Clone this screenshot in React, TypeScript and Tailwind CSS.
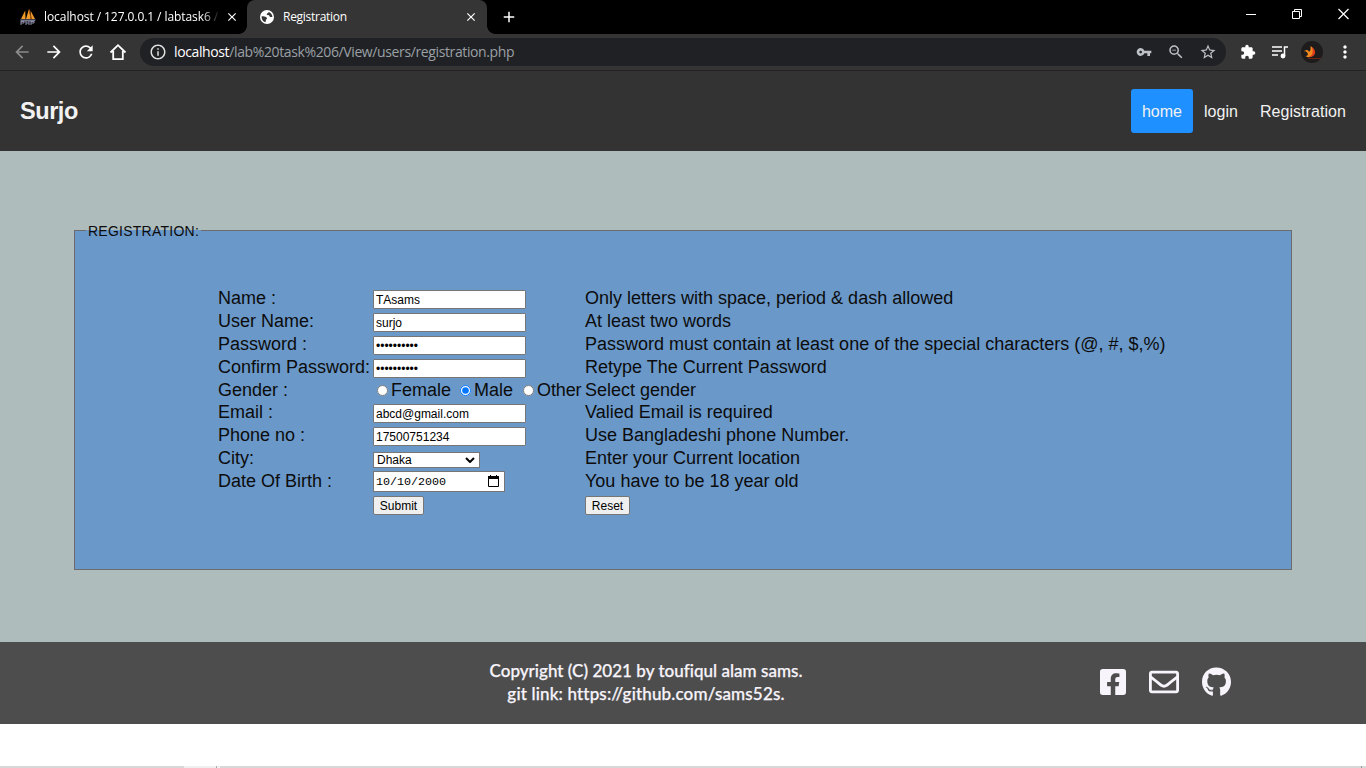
import type { ReactNode } from "react";
import {
  MdArrowBack,
  MdArrowForward,
  MdRefresh,
  MdOutlineInfo,
  MdVpnKey,
  MdStarBorder,
  MdExtension,
  MdMoreVert,
  MdZoomOut,
  MdClose,
  MdAdd,
} from "react-icons/md";
import { FaFacebookSquare, FaRegEnvelope, FaGithub } from "react-icons/fa";

function TabStrip() {
  return (
    <div className="flex h-[34px] bg-black text-[12px] text-white font-['Open_Sans','Noto_Sans',sans-serif]">
      <div className="flex h-[34px] w-[247px] items-center pl-5">
        <svg viewBox="0 0 16 16" className="h-4 w-4 shrink-0">
          <path d="M5.2 1.5 1 10h4.5zM9 0 6 10h4.6zM10.5 1.5 11.5 10H15z" fill="#f29b26" />
          <path d="M9 0 10.6 10h.8L9.8 1z" fill="#c7651a" />
          <path d="M0 10.5h16l-1.5 2H1z" fill="#77798f" />
          <path d="M1 12v4M1 12.5h3v1.5H1M6 12v4M6 14h3M9 12v4M11 12v4M11 12.5h3v1.5h-3" fill="none" stroke="#8b8da6" />
        </svg>
        <div className="ml-2 w-[176px] whitespace-nowrap tracking-[-0.07px] [mask-image:linear-gradient(to_right,black_158px,transparent_176px)]">
          localhost / 127.0.0.1 / labtask6 / l
        </div>
        <MdClose className="ml-[5px] h-[14px] w-[14px] shrink-0" />
      </div>
      <div className="relative flex h-[34px] w-[240px] items-center rounded-t-[8px] bg-[#353535] pl-3">
        <div className="absolute bottom-0 -left-2 h-2 w-2 bg-[radial-gradient(circle_at_0_0,#000_7.5px,#353535_8px)]" />
        <div className="absolute -right-2 bottom-0 h-2 w-2 bg-[radial-gradient(circle_at_100%_0,#000_7.5px,#353535_8px)]" />
        <svg viewBox="0 0 16 16" className="h-4 w-4 shrink-0">
          <circle cx="8" cy="8" r="7" fill="#fff" />
          <path d="M2.6 7.2c2 .1 3.6.2 4.900 1.200 1 .8.3 1.800-.6 2 .1 1.300-.1 2-.6 2.900C4 12.500 2.500 10.500 2.600 7.200z" fill="#353535" />
          <path d="M9.700 2.900c-.2 1.200-1.500 1-1.900 2.100-.3 1 .7 1.400 1.400 1.100.9-.3 1.200 1.200 1.700 1.700.6.500 1.600.3 2.500.2.100-2.300-1.500-4.500-3.700-5.100z" fill="#353535" />
        </svg>
        <span className="ml-2 w-[181px] tracking-[-0.28px]">Registration</span>
        <MdClose className="h-[14px] w-[14px] shrink-0" />
      </div>
      <MdAdd className="mt-[8px] ml-[13px] h-[18px] w-[18px]" />
      <div className="ml-auto flex h-7 items-center">
        <svg viewBox="0 0 104 12" className="mr-[16px] h-3 w-[104px]" fill="none" stroke="#fff">
          <path d="M0 6.500h10" />
          <path d="M46.500 3.500h7v7h-7zM48.500 3.500v-2h7v7h-2" />
          <path d="m92.500 1 10 10m0-10-10 10" strokeWidth="1.200" />
        </svg>
      </div>
    </div>
  );
}

function Toolbar() {
  return (
    <div className="flex h-[37px] items-center border-b border-[#222] bg-[#353535] pb-px text-white">
      <MdArrowBack className="ml-[12px] h-5 w-5 text-[#8a8a8a]" />
      <MdArrowForward className="ml-3 h-5 w-5" />
      <MdRefresh className="ml-3 h-5 w-5" />
      <svg viewBox="0 0 20 20" className="ml-3 h-5 w-5" fill="none" stroke="#fff" strokeWidth="1.800">
        <path d="M2.500 10.500 10 3.200l7.500 7.300M5.200 9v8.100h9.600V9" />
      </svg>
      <div className="ml-3 flex h-7 w-[1086px] items-center rounded-full bg-[#202124] pl-[9px] text-[#bdc1c6]">
        <MdOutlineInfo className="h-[18px] w-[18px] text-[#e0e0e0]" />
        <span className="ml-[7px] text-[14px] whitespace-nowrap text-[#9aa0a6] font-['Open_Sans','Noto_Sans',sans-serif] tracking-[-0.38px]">
          <span className="text-white">localhost</span>/lab%20task%206/View/users/registration.php
        </span>
        <MdVpnKey className="ml-auto h-4 w-4" />
        <MdZoomOut className="ml-[15px] h-[18px] w-[18px]" />
        <MdStarBorder className="mr-[9px] ml-[14px] h-[18px] w-[18px]" />
      </div>
      <MdExtension className="ml-[14px] h-4 w-4" />
      <svg viewBox="0 0 16 14" className="ml-4 h-[14px] w-4" fill="none" stroke="#fff" strokeWidth="1.500">
        <path d="M0 2h10M0 6h10M0 10h6M12.500 11V2H16" />
        <circle cx="11" cy="11" r="1.700" fill="#fff" />
      </svg>
      <svg viewBox="0 0 22 22" className="ml-[13px] h-[22px] w-[22px]">
        <circle cx="11" cy="11" r="11" fill="#1d1b1b" />
        <path d="M2.500 10.500c1.500-1.500 4-2.500 5-.5 1.500 2 2.500-2 2-5 3 2 5 5 3.500 8.500-2 3-6 3.500-8.500 1.500 2 0 3-1 2-3-1-1.500-2.500-2-4-1.500z" fill="#f2891f" />
        <path d="M8 15.500c3.500-.5 4.500-4 3-9.500 4 3.500 4 7 1 9-1.500 1-3.500 1.300-4 .5z" fill="#dc3d1b" />
        <path d="M7 17.500h13" stroke="#6b2412" />
      </svg>
      <MdMoreVert className="ml-[12px] h-5 w-5" />
    </div>
  );
}

const boxClass =
  "block h-[19px] w-[153px] rounded-[1px] border border-[#767676] bg-white px-[2px] text-[12px] leading-[17px] text-black outline-none [font-kerning:none]";

function Row({ label, hint, children }: { label: string; hint: ReactNode; children: ReactNode }) {
  return (
    <>
      <div className="pt-px">{label}</div>
      <div>{children}</div>
      <div className="pt-px">{hint}</div>
    </>
  );
}

function Choice({ label, checked, width }: { label: string; checked?: boolean; width: string }) {
  return (
    <label className={"flex pt-px " + width}>
      <input type="radio" name="gender" defaultChecked={checked} className="mt-[5px] mr-[3px] h-[11px] w-[11px] shrink-0" />
      {label}
    </label>
  );
}

function RegistrationForm() {
  return (
    <form className="grid grid-cols-[155px_212px_1fr] grid-rows-[23px_23px_23px_23px_22px_23px_23px_23px_23px_24px] text-[18px] leading-[21px] whitespace-nowrap text-[#0c0c0c]">
      <Row label="Name :" hint="Only letters with space, period & dash allowed">
        <input className={boxClass + " mt-[3px]"} defaultValue="TAsams" />
      </Row>
      <Row label="User Name:" hint="At least two words">
        <input className={boxClass + " mt-[3px]"} defaultValue="surjo" />
      </Row>
      <Row label="Password :" hint="Password must contain at least one of the special characters (@, #, $,%)">
        <input className={boxClass + " mt-[3px]"} defaultValue="••••••••••" />
      </Row>
      <Row label="Confirm Password:" hint="Retype The Current Password">
        <input className={boxClass + " mt-[3px]"} defaultValue="••••••••••" />
      </Row>
      <Row label="Gender :" hint="Select gender">
        <div className="flex pl-1">
          <Choice label="Female" width="w-[83px]" />
          <Choice label="Male" checked width="w-[63px]" />
          <Choice label="Other" width="w-[58px] tracking-[-0.1px]" />
        </div>
      </Row>
      <Row label="Email :" hint="Valied Email is required">
        <input className={boxClass + " mt-[3px]"} defaultValue="abcd@gmail.com" />
      </Row>
      <Row label="Phone no :" hint="Use Bangladeshi phone Number.">
        <input className={boxClass + " mt-[3px]"} defaultValue="17500751234" />
      </Row>
      <Row label="City:" hint="Enter your Current location">
        <div className="mt-[5px] flex h-4 w-[107px] items-center justify-between border border-[#767676] bg-white pr-1 pl-[3px] text-[12px] leading-[14px] text-black">
          Dhaka
          <svg viewBox="0 0 10 6" className="h-[6px] w-[10px]" fill="none" stroke="#000" strokeWidth="2">
            <path d="m1 1 4 4 4-4" />
          </svg>
        </div>
      </Row>
      <Row label="Date Of Birth :" hint="You have to be 18 year old">
        <div className="mt-px flex h-[21px] w-[132px] items-center justify-between border border-[#767676] bg-white pr-[5px] pl-[2px] text-[11.7px] leading-[19px] text-black font-['Liberation_Mono',monospace]">
          <span className="pt-[2px]">10/10/2000</span>
          <svg viewBox="0 0 11 12" className="-mt-[2px] h-3 w-[11px]">
            <path d="M.5 1.500h10v10H.5z" fill="none" stroke="#000" />
            <path d="M0 1h11v3H0zM2 0h1v2H2zM8 0h1v2H8z" />
          </svg>
        </div>
      </Row>
      <div />
      <div>
        <button type="button" className="mt-[3px] block h-[19px] w-[51px] rounded-[2px] border border-[#767676] bg-[#efefef] pt-px text-[12px] leading-[17px] text-black">
          Submit
        </button>
      </div>
      <div>
        <button type="button" className="mt-[3px] block h-[19px] w-[45px] rounded-[2px] border border-[#767676] bg-[#efefef] pt-px text-[12px] leading-[17px] text-black">
          Reset
        </button>
      </div>
    </form>
  );
}

export default function App() {
  return (
    <div className="flex h-[768px] w-[1366px] flex-col overflow-hidden bg-white font-['Liberation_Sans',Arial,sans-serif]">
      <TabStrip />
      <Toolbar />
      <header className="flex h-20 items-center justify-between bg-[#333] pr-[9px] pl-5 text-[#f2f2f2]">
        <h1 className="pb-px text-[23.5px] leading-7 font-bold tracking-[-0.45px]">Surjo</h1>
        <nav className="flex text-[16px] leading-[43px] tracking-[0.02px]">
          <a className="rounded-[3px] bg-[#1e90ff] px-[11px] pt-px">home</a>
          <a className="px-[11px] pt-px">login</a>
          <a className="px-[11px] pt-px tracking-[0.06px]">Registration</a>
        </nav>
      </header>
      <main className="h-[491px] bg-[#aebcbc] px-[74px] pt-[71px]">
        <fieldset className="h-[348px] border border-[#6c6c6c] bg-[#6a98c9] pr-10 pl-[143px]">
          <legend className="-ml-[132px] px-[2px] pt-[2px] text-[14px] leading-[14px] tracking-[0.25px] text-[#0c0c0c]">REGISTRATION:</legend>
          <div className="pt-[49px]">
            <RegistrationForm />
          </div>
        </fieldset>
      </main>
      <footer className="flex h-[82px] bg-[#4d4d4d] text-[#f8f4fb]">
        <p className="ml-[446px] w-[400px] pt-[17px] text-center text-[17px] leading-[23px] font-medium tracking-[0.03px] font-['Lato',sans-serif] [-webkit-text-stroke:0.25px_#f8f4fb]">
          Copyright (C) 2021 by toufiqul alam sams.
          <br />
          <span className="tracking-[0.16px]">git link: https://github.com/sams52s.</span>
        </p>
        <div className="ml-[254px] flex items-center pb-[2px]">
          <FaFacebookSquare className="h-[30px] w-[26px]" />
          <FaRegEnvelope className="ml-[23px] h-[30px] w-[30px]" />
          <FaGithub className="ml-[23px] h-[30px] w-[29px]" />
        </div>
      </footer>
      <div className="mt-auto flex h-[2px] bg-[#d7d7d7]">
        <div className="ml-[184px] h-[2px] w-8 bg-[#efefef]" />
        <div className="h-[2px] w-px bg-[#aaa]" />
        <div className="h-[2px] w-[3px] bg-[#efefef]" />
        <div className="mr-1 ml-auto h-[2px] w-px bg-[#999]" />
      </div>
    </div>
  );
}
